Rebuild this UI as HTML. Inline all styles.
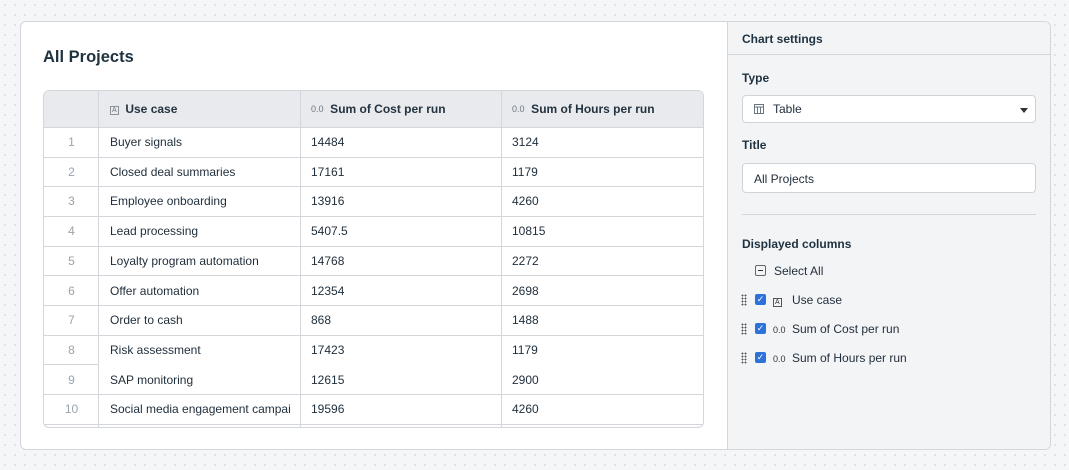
<!DOCTYPE html>
<html><head><style>
*{box-sizing:border-box;margin:0;padding:0}
body{width:1069px;height:470px;overflow:hidden;font-family:"Liberation Sans",sans-serif;color:#1f2d3a;font-size:12px;
background:#f5f6f8;background-image:radial-gradient(#d9dde2 0.8px,transparent 1px);background-size:10px 10px;position:relative}
.card{position:absolute;left:20px;top:21px;width:1031px;height:429px;border:1px solid #d3d7dc;border-radius:6px;background:#fff;overflow:hidden}
.right{position:absolute;left:706px;top:0;width:325px;height:100%;background:#f3f4f6;border-left:1px solid #d3d7dc}
h1{position:absolute;left:22px;top:26px;font-size:16.5px;font-weight:bold;color:#1f3240}
.tbl{position:absolute;left:22px;top:68px;width:661px;height:338px;border:1px solid #d3d7dc;border-radius:6px;overflow:hidden}
.hdr{position:absolute;left:0;top:0;width:100%;height:37px;background:#e8eaed;border-bottom:1px solid #d3d7dc}
.vl{position:absolute;top:0;bottom:0;width:1px;background:#d3d7dc}
.hl{position:absolute;height:1px;background:#d3d7dc}
.t{position:absolute;white-space:nowrap;font-size:12px;line-height:14px}
.n{color:#9aa3ab;text-align:center;width:55px;left:0}
.hd{font-weight:bold;font-size:12px;color:#24333f}
.ic{font-size:9px;color:#6b7680;font-weight:normal;vertical-align:1px}
.lbl{position:absolute;left:14px;font-weight:bold;font-size:12px;color:#1f3240}
.box{position:absolute;left:14px;width:294px;background:#fff;border:1px solid #cfd4d9;border-radius:4px}
.cb{position:absolute;width:11px;height:11px;background:#2d72d9;border-radius:2px;color:#fff;font-size:9px;line-height:11px;text-align:center}
.drag{position:absolute;width:6px;height:12px;background-image:radial-gradient(#555 0.8px,transparent 1px);background-size:3px 3px}
</style></head><body>
<div class="card">
<h1>All Projects</h1>
<div class="tbl">
<div class="hdr"></div>
<div class="vl" style="left:54px"></div><div class="vl" style="left:256px"></div><div class="vl" style="left:457px"></div>
<div class="hl" style="left:0;right:0;top:66px"></div>
<div class="hl" style="left:0;right:0;top:95px"></div>
<div class="hl" style="left:0;right:0;top:125px"></div>
<div class="hl" style="left:0;right:0;top:155px"></div>
<div class="hl" style="left:0;right:0;top:184px"></div>
<div class="hl" style="left:0;right:0;top:214px"></div>
<div class="hl" style="left:0;right:0;top:244px"></div>
<div class="hl" style="left:0;width:54px;top:273px"></div>
<div class="hl" style="left:0;right:0;top:303px"></div>
<div class="hl" style="left:0;right:0;top:333px"></div>
<div class="t hd" style="left:66px;top:11px"><span class="ic" style="border:1px solid #8a949c;padding:0 1px;font-size:7px">A</span>&nbsp;&nbsp;Use case</div>
<div class="t hd" style="left:267px;top:11px"><span class="ic">0.0</span>&nbsp; Sum of Cost per run</div>
<div class="t hd" style="left:468px;top:11px"><span class="ic">0.0</span>&nbsp; Sum of Hours per run</div>
<div style="position:absolute;left:0;top:44px;width:100%">
<div class="t n" style="top:0">1</div><div class="t" style="left:66px;top:0">Buyer signals</div><div class="t" style="left:267px;top:0">14484</div><div class="t" style="left:468px;top:0">3124</div>
<div class="t n" style="top:29.7px">2</div><div class="t" style="left:66px;top:29.7px">Closed deal summaries</div><div class="t" style="left:267px;top:29.7px">17161</div><div class="t" style="left:468px;top:29.7px">1179</div>
<div class="t n" style="top:59.4px">3</div><div class="t" style="left:66px;top:59.4px">Employee onboarding</div><div class="t" style="left:267px;top:59.4px">13916</div><div class="t" style="left:468px;top:59.4px">4260</div>
<div class="t n" style="top:89.1px">4</div><div class="t" style="left:66px;top:89.1px">Lead processing</div><div class="t" style="left:267px;top:89.1px">5407.5</div><div class="t" style="left:468px;top:89.1px">10815</div>
<div class="t n" style="top:118.8px">5</div><div class="t" style="left:66px;top:118.8px">Loyalty program automation</div><div class="t" style="left:267px;top:118.8px">14768</div><div class="t" style="left:468px;top:118.8px">2272</div>
<div class="t n" style="top:148.5px">6</div><div class="t" style="left:66px;top:148.5px">Offer automation</div><div class="t" style="left:267px;top:148.5px">12354</div><div class="t" style="left:468px;top:148.5px">2698</div>
<div class="t n" style="top:178.2px">7</div><div class="t" style="left:66px;top:178.2px">Order to cash</div><div class="t" style="left:267px;top:178.2px">868</div><div class="t" style="left:468px;top:178.2px">1488</div>
<div class="t n" style="top:207.9px">8</div><div class="t" style="left:66px;top:207.9px">Risk assessment</div><div class="t" style="left:267px;top:207.9px">17423</div><div class="t" style="left:468px;top:207.9px">1179</div>
<div class="t n" style="top:237.6px">9</div><div class="t" style="left:66px;top:237.6px">SAP monitoring</div><div class="t" style="left:267px;top:237.6px">12615</div><div class="t" style="left:468px;top:237.6px">2900</div>
<div class="t n" style="top:267.3px">10</div><div class="t" style="left:66px;top:267.3px;width:180px;overflow:hidden">Social media engagement campaign</div><div class="t" style="left:267px;top:267.3px">19596</div><div class="t" style="left:468px;top:267.3px">4260</div>
</div>
</div>
<div class="right">
<div style="position:absolute;left:0;top:0;width:100%;height:33px;border-bottom:1px solid #d3d7dc"></div>
<div class="lbl" style="top:10px">Chart settings</div>
<div class="lbl" style="top:49px">Type</div>
<div class="box" style="top:73px;height:28px"><svg style="position:absolute;left:11px;top:8px" width="10" height="10" viewBox="0 0 10 10" fill="none" stroke="#6b7680" stroke-width="1"><rect x="0.5" y="0.5" width="9" height="9"/><path d="M0.5 3H9.5M3.5 3V9.5M6.5 3V9.5"/></svg><span class="t" style="left:30px;top:6px">Table</span><span style="position:absolute;right:7px;top:12px;border:4px solid transparent;border-top:5px solid #333;border-bottom:0"></span></div>
<div class="lbl" style="top:116px">Title</div>
<div class="box" style="top:141px;height:30px"><span class="t" style="left:11px;top:8px">All Projects</span></div>
<div class="hl" style="left:14px;width:294px;top:192px"></div>
<div class="lbl" style="top:215px">Displayed columns</div>
<div style="position:absolute;left:27px;top:243px;width:11px;height:11px;border:1px solid #666;border-radius:2px"><div style="position:absolute;left:2px;top:4px;width:5px;height:1px;background:#333"></div></div>
<div class="t" style="left:46px;top:242px">Select All</div>
<div class="drag" style="left:13px;top:272px"></div><div class="cb" style="left:27px;top:272px">✓</div><div class="t" style="left:45px;top:271px"><span style="font-size:7px;border:1px solid #555;padding:0 1px">A</span></div><div class="t" style="left:64px;top:271px">Use case</div>
<div class="drag" style="left:13px;top:301px"></div><div class="cb" style="left:27px;top:301px">✓</div><div class="t ic" style="left:45px;top:301px;color:#333">0.0</div><div class="t" style="left:64px;top:300px">Sum of Cost per run</div>
<div class="drag" style="left:13px;top:330px"></div><div class="cb" style="left:27px;top:330px">✓</div><div class="t ic" style="left:45px;top:330px;color:#333">0.0</div><div class="t" style="left:64px;top:329px">Sum of Hours per run</div>
</div>
</div>
</body></html>
